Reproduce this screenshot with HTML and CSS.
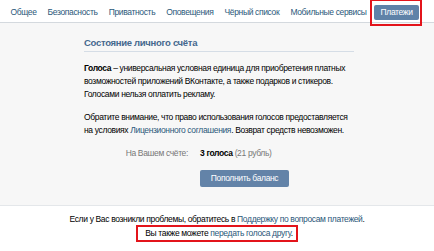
FILE: index.html
```html
<!DOCTYPE html>
<html lang="ru">
<head>
  <meta charset="UTF-8" />
  <title>Настройки | Платежи</title>
  <link rel="stylesheet" href="styles.css">
</head>
<body>

  <nav class="tabs">
    <a href="#">Общее</a>
    <a href="#">Безопасность</a>
    <a href="#">Приватность</a>
    <a href="#">Оповещения</a>
    <a href="#">Чёрный список</a>
    <a href="#">Мобильные сервисы</a>
    <a href="#" class="active">Платежи</a>
  </nav>

  <main class="panel">
    <div class="box">
      <h2>Состояние личного счёта</h2>
      <p><b>Голоса</b> – универсальная условная единица для приобретения платных возможностей приложений ВКонтакте, а также подарков и стикеров. Голосами нельзя оплатить рекламу.</p>
      <p>Обратите внимание, что право использования голосов предоставляется на условиях <a href="#">Лицензионного соглашения</a>. Возврат средств невозможен.</p>
      <div class="balance">
        <span class="label">На Вашем счёте:</span>
        <span><b>3 голоса</b> <span class="muted">(21 рубль)</span></span>
      </div>
      <div class="actions">
        <button class="btn">Пополнить баланс</button>
      </div>
    </div>
  </main>

  <footer class="footer">
    <div>Если у Вас возникли проблемы, обратитесь в <a href="#">Поддержку по вопросам платежей</a>.</div>
    <div class="marked">Вы также можете <a href="#">передать голоса другу</a>.</div>
  </footer>

</body>
</html>
```

FILE: styles.css
```css
* { box-sizing: border-box; }

body {
  margin: 0;
  font-family: 'Liberation Sans', Arial, sans-serif;
  font-size: 8.5px;
  letter-spacing: -0.35px;
  color: #000;
  background: #fff;
}

a {
  color: #2b587a;
  text-decoration: none;
}

.tabs {
  display: flex;
  align-items: center;
  height: 23px;
  padding: 2px 4px 0 5px;
  border-bottom: 1px solid #d4d9de;
  white-space: nowrap;
}

.tabs a {
  flex-shrink: 0;
  color: #2b587a;
  padding: 2px 5.5px;
}

.tabs a.active {
  position: relative;
  background: #5f82a8;
  color: #fff;
  border-radius: 2px;
  padding: 2px 6.5px 3px;
  margin-left: 2px;
}

/* red annotation frame */
.tabs a.active::after {
  content: '';
  position: absolute;
  top: -6px;
  bottom: -6px;
  left: -4px;
  right: -3px;
  border: 2px solid #e3141b;
}

.panel {
  background: #f7f7f7;
  border-bottom: 1px solid #e4e7ea;
  padding: 14px 0 18px;
}

.box {
  width: 270px;
  margin-left: 84px;
}

.box h2 {
  margin: 0 0 10px;
  padding-bottom: 2px;
  font-size: 9.5px;
  letter-spacing: -0.3px;
  line-height: 12px;
  font-weight: bold;
  color: #45688e;
  border-bottom: 1px solid #d5dde6;
}

.box p {
  margin: 0 0 10px;
  line-height: 13px;
}

.balance {
  display: flex;
  gap: 12px;
  line-height: 13px;
}

.balance .label {
  width: 104px;
  text-align: right;
  color: #777;
}

.muted {
  color: #777;
}

.actions {
  padding: 10px 0 0 116px;
}

.btn {
  font-family: inherit;
  font-size: 8.5px;
  letter-spacing: -0.35px;
  line-height: 11px;
  color: #fff;
  background: #6383a8;
  border: none;
  border-radius: 2px;
  width: 89px;
  padding: 3px 0;
  cursor: pointer;
}

.footer {
  text-align: center;
  padding-top: 6px;
  line-height: 14px;
}

.marked {
  display: inline-block;
  border: 2px solid #e3141b;
  line-height: 13px;
  padding: 0 3px 0 7px;
  margin-top: -1px;
}
```
